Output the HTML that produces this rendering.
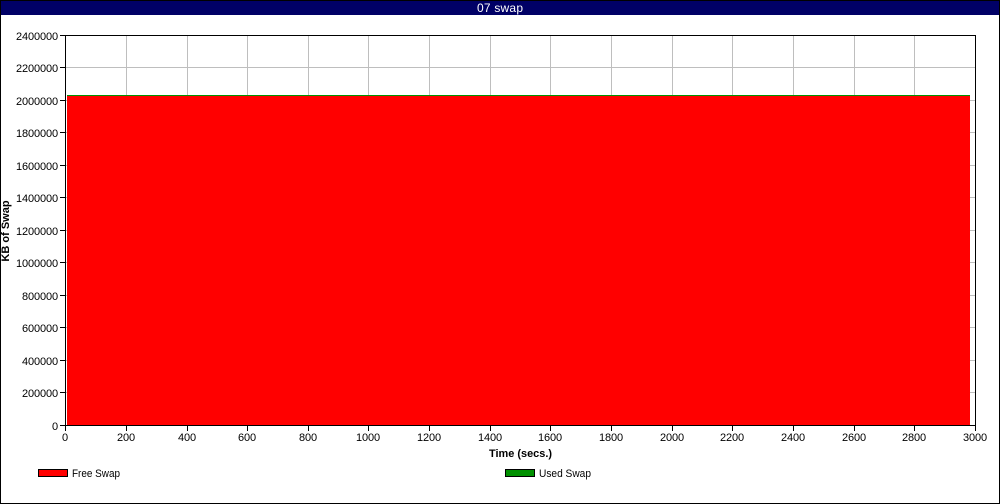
<!DOCTYPE html>
<html><head><meta charset="utf-8"><style>
html,body{margin:0;padding:0;background:#fff;width:1000px;height:504px;overflow:hidden}
svg{display:block}
text{font-family:"Liberation Sans",sans-serif;font-size:11px;fill:#000}
.y{text-anchor:end;letter-spacing:-0.12px}.x{text-anchor:middle;letter-spacing:-0.12px}
.b{font-weight:bold;letter-spacing:0}
</style></head><body>
<svg width="1000" height="504" viewBox="0 0 1000 504" xmlns="http://www.w3.org/2000/svg">
<rect x="0" y="0" width="1000" height="504" fill="#000"/>
<rect x="1" y="1" width="998" height="502" fill="#fff"/>
<rect x="1" y="1" width="998" height="14" fill="#000066"/>
<text x="500" y="12" text-anchor="middle" textLength="46" lengthAdjust="spacing" style="fill:#fff;font-size:12px">07 swap</text>
<g shape-rendering="crispEdges">
<path stroke="#bebebe" stroke-width="1" fill="none" d="M126.5 35V425M187.5 35V425M247.5 35V425M308.5 35V425M368.5 35V425M429.5 35V425M490.5 35V425M550.5 35V425M611.5 35V425M672.5 35V425M732.5 35V425M793.5 35V425M854.5 35V425M914.5 35V425M65 67.5H975M65 100.5H975M65 132.5H975M65 165.5H975M65 197.5H975M65 230.5H975M65 262.5H975M65 295.5H975M65 327.5H975M65 360.5H975M65 392.5H975"/>
<rect x="67" y="95" width="903" height="331" fill="#ff0000"/>
<rect x="67" y="95" width="903" height="1" fill="#009000"/>
<path stroke="#000" stroke-width="1" fill="none" d="M65.5 35.5H975.5V425.5H65.5ZM60 35.5H65M60 67.5H65M60 100.5H65M60 132.5H65M60 165.5H65M60 197.5H65M60 230.5H65M60 262.5H65M60 295.5H65M60 327.5H65M60 360.5H65M60 392.5H65M60 425.5H65M65.5 425V431M126.5 425V431M187.5 425V431M247.5 425V431M308.5 425V431M368.5 425V431M429.5 425V431M490.5 425V431M550.5 425V431M611.5 425V431M672.5 425V431M732.5 425V431M793.5 425V431M854.5 425V431M914.5 425V431M975.5 425V431"/>
<rect x="38.5" y="469.5" width="29" height="7" fill="#ff0000" stroke="#000"/>
<rect x="505.5" y="469.5" width="29" height="7" fill="#009000" stroke="#000"/>
</g>
<text x="58" y="40" class="y">2400000</text>
<text x="58" y="72" class="y">2200000</text>
<text x="58" y="105" class="y">2000000</text>
<text x="58" y="137" class="y">1800000</text>
<text x="58" y="170" class="y">1600000</text>
<text x="58" y="202" class="y">1400000</text>
<text x="58" y="235" class="y">1200000</text>
<text x="58" y="267" class="y">1000000</text>
<text x="58" y="300" class="y">800000</text>
<text x="58" y="332" class="y">600000</text>
<text x="58" y="365" class="y">400000</text>
<text x="58" y="397" class="y">200000</text>
<text x="58" y="430" class="y">0</text>
<text x="65" y="441" class="x">0</text>
<text x="126" y="441" class="x">200</text>
<text x="187" y="441" class="x">400</text>
<text x="247" y="441" class="x">600</text>
<text x="308" y="441" class="x">800</text>
<text x="368" y="441" class="x">1000</text>
<text x="429" y="441" class="x">1200</text>
<text x="490" y="441" class="x">1400</text>
<text x="550" y="441" class="x">1600</text>
<text x="611" y="441" class="x">1800</text>
<text x="672" y="441" class="x">2000</text>
<text x="732" y="441" class="x">2200</text>
<text x="793" y="441" class="x">2400</text>
<text x="854" y="441" class="x">2600</text>
<text x="914" y="441" class="x">2800</text>
<text x="975" y="441" class="x">3000</text>
<text x="520.5" y="457" class="x b" textLength="63" lengthAdjust="spacingAndGlyphs">Time (secs.)</text>
<text transform="translate(9,231) rotate(-90)" class="x b">KB of Swap</text>
<text x="72" y="477" textLength="48" lengthAdjust="spacingAndGlyphs">Free Swap</text>
<text x="539" y="477" textLength="52" lengthAdjust="spacingAndGlyphs">Used Swap</text>
</svg>
</body></html>
